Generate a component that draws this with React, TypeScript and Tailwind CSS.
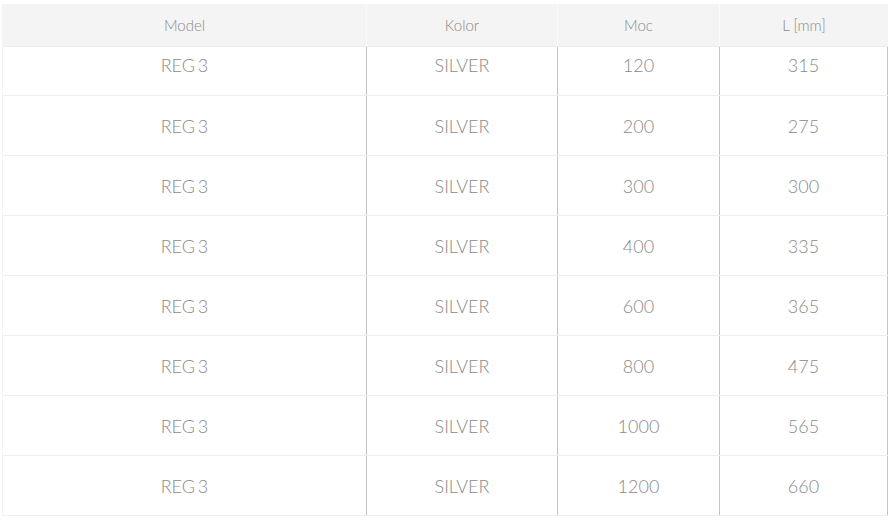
const rows = [
  ["REG 3", "SILVER", "120", "315"],
  ["REG 3", "SILVER", "200", "275"],
  ["REG 3", "SILVER", "300", "300"],
  ["REG 3", "SILVER", "400", "335"],
  ["REG 3", "SILVER", "600", "365"],
  ["REG 3", "SILVER", "800", "475"],
  ["REG 3", "SILVER", "1000", "565"],
  ["REG 3", "SILVER", "1200", "660"],
];

const headers = ["Model", "Kolor", "Moc", "L [mm]"];

export default function App() {
  return (
    <div className="h-[521px] w-[889px] overflow-hidden bg-white pt-[4px] pl-[2px] font-['Lato_Light',Lato,sans-serif] text-[#8a8a8a]">
      <div className="w-[886px] border-l border-[#f3f3f3]">
        {/* Header */}
        <div className="grid h-[43px] grid-cols-[364px_191px_162px_168px] border-b border-[#ececec] bg-[#f4f4f4] text-[15px] font-light">
          {headers.map((h, i) => (
            <div
              key={h}
              className={`flex items-center justify-center ${i < 3 ? "border-r border-[#fafafa]" : ""}`}
            >
              {h}
            </div>
          ))}
        </div>

        {/* Body */}
        {rows.map((r, ri) => (
          <div
            key={ri}
            className={`grid grid-cols-[364px_191px_162px_168px] border-b border-[#eeeeee] text-[18px] font-light ${
              ri === 0 ? "h-[49px]" : "h-[60px]"
            }`}
          >
            {r.map((c, ci) => (
              <div
                key={ci}
                className={`flex justify-center border-r border-[#c4c4c4] leading-[24px] ${
                  ri === 0 ? "items-start pt-[6px]" : "items-center"
                }`}
              >
                <span className="[word-spacing:-2px]">{c}</span>
              </div>
            ))}
          </div>
        ))}
      </div>
    </div>
  );
}
